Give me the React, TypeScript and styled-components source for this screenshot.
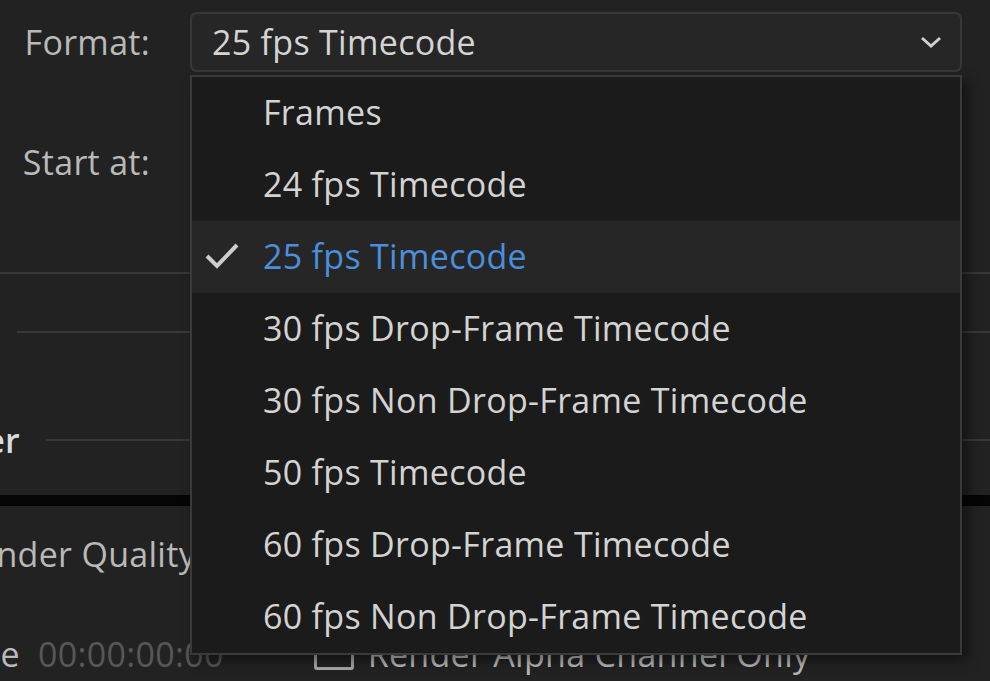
import styled, { createGlobalStyle } from "styled-components";

const GlobalStyle = createGlobalStyle`
  html, body {
    margin: 0;
    padding: 0;
    background: #222222;
  }
  body {
    font-family: "Open Sans", "Liberation Sans", sans-serif;
  }
`;

const Page = styled.div`
  width: 990px;
  height: 681px;
  overflow: hidden;
  background: #222222;
  display: flex;
  flex-direction: column;
  font-size: 34px;
  letter-spacing: 0.3px;
  color: #bdbdbd;
`;

const FieldRow = styled.div<{ $top: number; $h: number; $gap?: number }>`
  display: flex;
  align-items: center;
  gap: ${(p) => p.$gap ?? 40}px;
  height: ${(p) => p.$h}px;
  margin-top: ${(p) => p.$top}px;
  flex-shrink: 0;
`;

const Label = styled.div<{ $w: number }>`
  width: ${(p) => p.$w}px;
  flex-shrink: 0;
  display: flex;
  justify-content: flex-end;
  white-space: nowrap;
  color: #b9b9b9;
`;

const SelectWrap = styled.div`
  position: relative;
  flex: 1;
  margin-right: 28px;
  height: 100%;
`;

const SelectBox = styled.div`
  box-sizing: border-box;
  height: 100%;
  display: flex;
  align-items: center;
  justify-content: space-between;
  padding: 0 18px 0 20px;
  background: #262626;
  border: 2px solid #383838;
  border-radius: 7px;
  color: #d4d4d4;
  white-space: nowrap;
`;

const Menu = styled.ul`
  position: absolute;
  z-index: 10;
  top: calc(100% + 3px);
  left: 0;
  right: 0;
  margin: 0;
  padding: 0;
  list-style: none;
  background: #1b1b1b;
  border: 2px solid #3a3a3a;
  box-shadow: 6px 6px 12px rgba(0, 0, 0, 0.45);
`;

const MenuItem = styled.li<{ $selected?: boolean }>`
  display: flex;
  align-items: center;
  height: 72px;
  padding-bottom: 3px;
  box-sizing: border-box;
  white-space: nowrap;
  background: ${(p) => (p.$selected ? "#262626" : "transparent")};
  color: ${(p) => (p.$selected ? "#4a8fde" : "#d3d3d3")};
`;

const CheckSlot = styled.span`
  width: 71px;
  flex-shrink: 0;
  display: flex;
  align-items: center;
  padding-left: 12px;
  box-sizing: border-box;
`;

const Rule = styled.div<{ $top: number; $indent?: number }>`
  height: 2px;
  margin-top: ${(p) => p.$top}px;
  margin-left: ${(p) => p.$indent ?? 0}px;
  background: #383838;
  flex-shrink: 0;
`;

const SectionHead = styled.div<{ $top: number }>`
  display: flex;
  align-items: center;
  gap: 26px;
  height: 40px;
  margin-top: ${(p) => p.$top}px;
  flex-shrink: 0;
`;

const SectionTitle = styled.div`
  width: 20px;
  flex-shrink: 0;
  display: flex;
  justify-content: flex-end;
  white-space: nowrap;
  color: #dadada;
  font-weight: 600;
`;

const SectionLine = styled.div`
  flex: 1;
  height: 2px;
  background: #383838;
`;

const BlackBar = styled.div<{ $top: number }>`
  height: 11px;
  margin-top: ${(p) => p.$top}px;
  background: #050505;
  flex-shrink: 0;
`;

const Timecode = styled.span`
  color: #575757;
  white-space: nowrap;
`;

const CheckRow = styled.label`
  display: flex;
  align-items: center;
  gap: 14px;
  margin-left: 72px;
  white-space: nowrap;
  color: #b9b9b9;
`;

const CheckBox = styled.span`
  width: 40px;
  height: 32px;
  box-sizing: border-box;
  border: 3px solid #a8a8a8;
  border-radius: 3px;
  flex-shrink: 0;
`;

const options = [
  "Frames",
  "24 fps Timecode",
  "25 fps Timecode",
  "30 fps Drop-Frame Timecode",
  "30 fps Non Drop-Frame Timecode",
  "50 fps Timecode",
  "60 fps Drop-Frame Timecode",
  "60 fps Non Drop-Frame Timecode",
];

export default function App() {
  const selected = "25 fps Timecode";

  return (
    <>
      <GlobalStyle />
      <Page>
        <FieldRow $top={12} $h={60}>
          <Label $w={150}>Format:</Label>
          <SelectWrap>
            <SelectBox>
              <span>{selected}</span>
              <svg width="22" height="14" viewBox="0 0 22 14">
                <polyline
                  points="2,3 11,11 20,3"
                  fill="none"
                  stroke="#cfcfcf"
                  strokeWidth="3"
                />
              </svg>
            </SelectBox>
            <Menu>
              {options.map((o) => (
                <MenuItem key={o} $selected={o === selected}>
                  <CheckSlot>
                    {o === selected ? (
                      <svg width="36" height="30" viewBox="0 0 36 30">
                        <polyline
                          points="3,15 13,25 33,4"
                          fill="none"
                          stroke="#cdcdcd"
                          strokeWidth="4"
                        />
                      </svg>
                    ) : null}
                  </CheckSlot>
                  {o}
                </MenuItem>
              ))}
            </Menu>
          </SelectWrap>
        </FieldRow>

        <FieldRow $top={60} $h={60}>
          <Label $w={150}>Start at:</Label>
        </FieldRow>

        <Rule $top={80} />
        <Rule $top={57} $indent={17} />

        <SectionHead $top={87}>
          <SectionTitle>Render</SectionTitle>
          <SectionLine />
        </SectionHead>

        <BlackBar $top={35} />

        <FieldRow $top={23} $h={50}>
          <Label $w={196}>Render Quality</Label>
        </FieldRow>

        <FieldRow $top={50} $h={50} $gap={18}>
          <Label $w={20}>Start Time</Label>
          <Timecode>00:00:00:00</Timecode>
          <CheckRow>
            <CheckBox />
            Render Alpha Channel Only
          </CheckRow>
        </FieldRow>
      </Page>
    </>
  );
}
